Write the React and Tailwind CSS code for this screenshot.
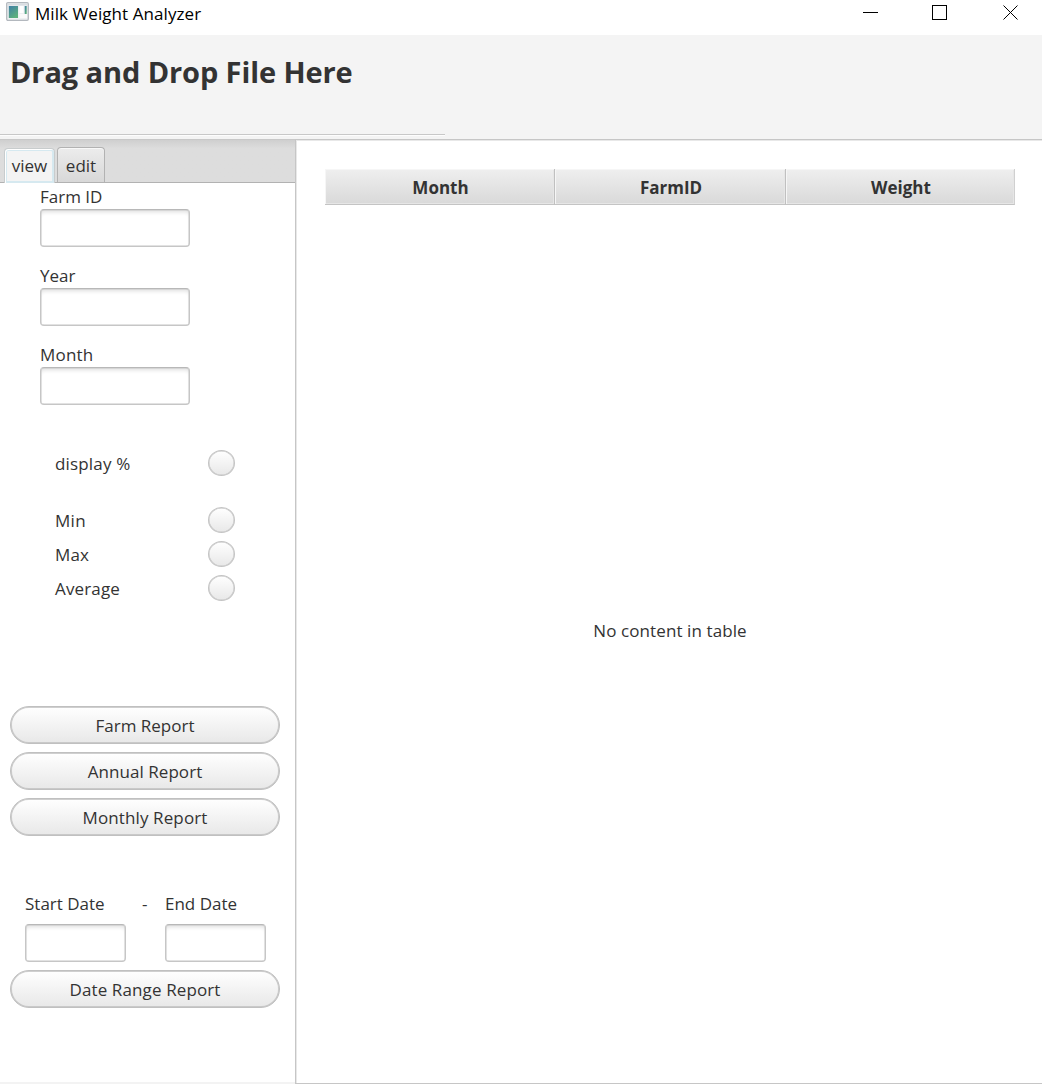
import React from "react";

const button =
  "flex h-[38px] w-[270px] items-center justify-center rounded-full border border-[#c0c0c0] bg-linear-to-b from-white to-[#e8e8e8] pt-[2px] leading-6 shadow-[inset_0_0_0_0.5px_#c0c0c0,inset_0_0_0_1px_rgba(190,190,190,0.5)]";

function PillButton({ children, tracking }) {
  return (
    <button className={button}>
      <span className={tracking}>{children}</span>
    </button>
  );
}

function TextField({ width }) {
  return (
    <input
      className={`${width} block h-[38px] rounded-[4px] border border-[#c6c6c6] border-t-[#b8b8b8] bg-white px-2 shadow-[inset_0_0_0_0.5px_#c6c6c6,inset_0_4px_4px_-2px_#dedede] outline-none`}
    />
  );
}

function Field({ label, tracking }) {
  return (
    <label className="block h-[79px]">
      <span className={`block h-6 leading-6 ${tracking}`}>{label}</span>
      <TextField width="w-[150px]" />
    </label>
  );
}

function Option({ label, tracking }) {
  return (
    <div className="flex h-[34px] w-[180px] items-start justify-between">
      <span className={`mt-[2px] leading-6 ${tracking}`}>{label}</span>
      <button
        aria-label={label}
        className="h-[26px] w-[27px] rounded-[50%] border border-[#c4c4c4] bg-linear-to-b from-white to-[#e8e8e8] shadow-[inset_0_0_0_0.5px_#c4c4c4]"
      />
    </div>
  );
}

function Column({ label, width, last }) {
  return (
    <div
      className={`flex h-[36px] ${width} items-center justify-center border-r border-b border-b-[#c4c4c4] bg-linear-to-b from-[#efefef] to-[#d9d9d9] pt-[2px] pl-[2px] font-bold shadow-[inset_1px_1px_0_#f6f6f6,inset_-1px_-1px_0_#e6e6e6] ${last ? "border-r-[#d0d0d0]" : "border-r-[#c0c0c0]"}`}
    >
      <span className="leading-6">{label}</span>
    </div>
  );
}

function TitleBar() {
  return (
    <header className="flex h-[35px] items-start bg-white text-black">
      <svg className="mt-[2px] ml-[6px] shrink-0" width="23" height="19" viewBox="0 0 23 19">
        <defs>
          <linearGradient id="pane" x1="0" y1="0" x2="0.6" y2="1">
            <stop offset="0" stopColor="#3f7fa6" />
            <stop offset="1" stopColor="#5cb07c" />
          </linearGradient>
        </defs>
        <rect x="0.7" y="0.7" width="21.6" height="17.6" rx="1.2" fill="#eef0f2" stroke="#b3b8be" strokeWidth="1.3" />
        <rect x="1.5" y="1.5" width="20" height="2" fill="#d9dde2" />
        <rect x="2.8" y="4" width="9.2" height="12" fill="url(#pane)" />
        <rect x="13.5" y="4" width="4" height="7" fill="#fff" />
        <rect x="13.5" y="12" width="7.5" height="4" fill="#fafafa" />
        <rect x="18.7" y="4" width="2" height="8" fill="url(#pane)" />
      </svg>
      <span className="ml-[6px] pt-[2px] text-[17px] leading-6 tracking-[0.07px]">Milk Weight Analyzer</span>
      <svg className="ml-auto shrink-0" width="179" height="26" viewBox="0 0 179 26" fill="none" stroke="#000" shapeRendering="crispEdges">
        <path d="M0 12.5h15M69.5 5.5h14v14h-14z" />
        <path d="M140.5 5.5l14 14M154.5 5.5l-14 14" shapeRendering="auto" />
      </svg>
    </header>
  );
}

export default function App() {
  return (
    <div className="flex h-[1084px] w-[1042px] flex-col overflow-hidden bg-white font-['Open_Sans',sans-serif] text-[17px] text-[#333]">
      <TitleBar />
      <section className="flex h-[104px] flex-col justify-between bg-[#f4f4f4]">
        <h1 className="mt-[17px] ml-[10px] text-[29px] leading-[40px] font-bold whitespace-nowrap tracking-[-0.1px]">
          Drag and Drop File Here
        </h1>
        <div className="mb-[3px] h-[2px] w-[445px] border-t border-[#c8c8c8] bg-[#fdfdfd]" />
      </section>
      <div className="flex h-[945px]">
        <aside className="flex w-[295px] flex-col border-t border-b-2 border-t-[#c8c8c8] border-b-[#f3f3f3]">
          <nav className="flex h-[43px] shrink-0 items-end border-b border-[#b2b2b2] bg-linear-to-b from-[#cfcfcf] via-[#dddddd] via-20% to-[#dddddd] pl-[4px]">
            <button className="relative -mb-px h-[35px] w-[51px] rounded-t-[4px] border border-b-0 border-[#c8cccd] bg-[#f4f4f4] leading-[34px] shadow-[inset_1px_1px_0_#fff,inset_0_0_0_2px_#d6e9f0]">
              view
            </button>
            <button className="ml-[2px] h-[35px] w-[48px] rounded-t-[4px] border border-b-0 border-[#b2b2b2] bg-linear-to-b from-[#ececec] to-[#d8d8d8] leading-[35px] shadow-[inset_0_1px_0_#f8f8f8]">
              edit
            </button>
          </nav>
          <div className="mt-[2px] pl-10">
            <Field label="Farm ID" tracking="tracking-[0px]" />
            <Field label="Year" tracking="tracking-[0px]" />
            <Field label="Month" tracking="tracking-[0.2px]" />
          </div>
          <div className="mt-[28px] pl-[55px]">
            <Option label="display %" tracking="tracking-[0.17px]" />
            <div className="h-[23px]" />
            <Option label="Min" tracking="tracking-[0.3px]" />
            <Option label="Max" tracking="tracking-[0.1px]" />
            <Option label="Average" tracking="tracking-[0.15px]" />
          </div>
          <div className="mt-[97px] flex flex-col gap-2 pl-[10px]">
            <PillButton tracking="tracking-[0px]">Farm Report</PillButton>
            <PillButton tracking="tracking-[0.05px]">Annual Report</PillButton>
            <PillButton tracking="tracking-[0.12px]">Monthly Report</PillButton>
          </div>
          <div className="mt-[56px] flex pl-[25px]">
            <label className="w-[117px]">
              <span className="block h-8 leading-6">Start Date</span>
              <TextField width="w-[101px]" />
            </label>
            <span className="w-[23px] leading-6">-</span>
            <label>
              <span className="block h-8 leading-6">End Date</span>
              <TextField width="w-[101px]" />
            </label>
          </div>
          <div className="mt-2 pl-[10px]">
            <PillButton tracking="tracking-[0.12px]">Date Range Report</PillButton>
          </div>
        </aside>
        <main className="flex flex-1 flex-col border border-r-0 border-[#c6c6c6] pt-[29px] pl-[29px] shadow-[inset_1px_1px_0_#e8e8e8]">
          <div className="flex w-[690px] shrink-0">
            <Column label="Month" width="w-[230px]" />
            <Column label="FarmID" width="w-[231px]" />
            <Column label="Weight" width="w-[229px]" last />
          </div>
          <p className="mt-[414px] w-[690px] text-center leading-6 tracking-[0.1px]">No content in table</p>
        </main>
      </div>
    </div>
  );
}
